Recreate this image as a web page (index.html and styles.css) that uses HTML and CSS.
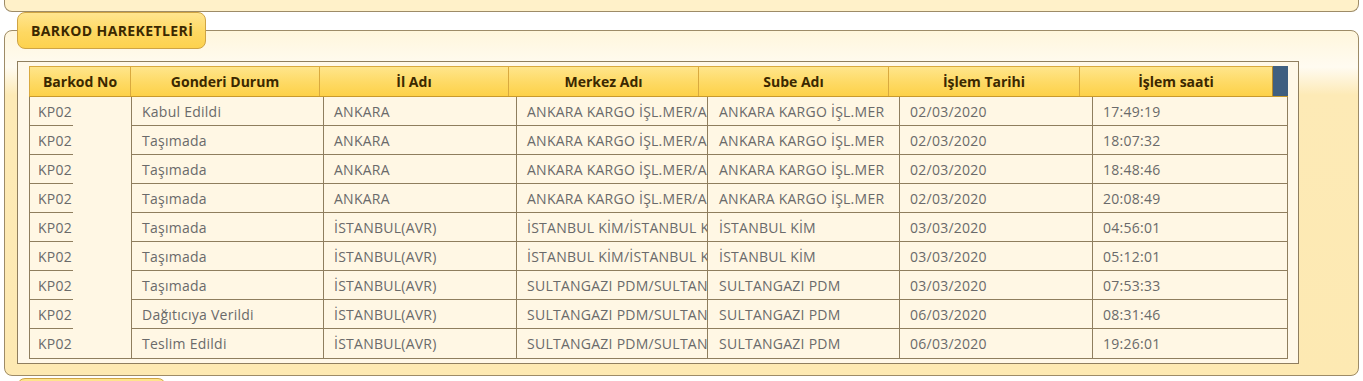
FILE: index.html
```html
<!DOCTYPE html>
<html lang="tr">
<head>
<meta charset="utf-8">
<title>Barkod Hareketleri</title>
<link rel="stylesheet" href="styles.css">
</head>
<body>
<div class="top-panel"></div>
<fieldset class="panel">
  <legend class="legend">BARKOD HAREKETLERİ</legend>
  <div class="grid-box">
    <div class="grid-head">
      <div class="hcell w1">Barkod No</div>
      <div class="hcell w2">Gonderi Durum</div>
      <div class="hcell w3">İl Adı</div>
      <div class="hcell w4">Merkez Adı</div>
      <div class="hcell w5">Sube Adı</div>
      <div class="hcell w6">İşlem Tarihi</div>
      <div class="hcell w7">İşlem saati</div>
      <div class="scroll"></div>
    </div>
    <div class="grid-body">
      <div class="row"><div class="cell c1"><span>KP02</span></div><div class="cell c2">Kabul Edildi</div><div class="cell c3">ANKARA</div><div class="cell c4">ANKARA KARGO İŞL.MER/ANKARA KARGO İŞL.MER</div><div class="cell c5">ANKARA KARGO İŞL.MER</div><div class="cell c6">02/03/2020</div><div class="cell c7">17:49:19</div></div>
      <div class="row"><div class="cell c1"><span>KP02</span></div><div class="cell c2">Taşımada</div><div class="cell c3">ANKARA</div><div class="cell c4">ANKARA KARGO İŞL.MER/ANKARA KARGO İŞL.MER</div><div class="cell c5">ANKARA KARGO İŞL.MER</div><div class="cell c6">02/03/2020</div><div class="cell c7">18:07:32</div></div>
      <div class="row"><div class="cell c1"><span>KP02</span></div><div class="cell c2">Taşımada</div><div class="cell c3">ANKARA</div><div class="cell c4">ANKARA KARGO İŞL.MER/ANKARA KARGO İŞL.MER</div><div class="cell c5">ANKARA KARGO İŞL.MER</div><div class="cell c6">02/03/2020</div><div class="cell c7">18:48:46</div></div>
      <div class="row"><div class="cell c1"><span>KP02</span></div><div class="cell c2">Taşımada</div><div class="cell c3">ANKARA</div><div class="cell c4">ANKARA KARGO İŞL.MER/ANKARA KARGO İŞL.MER</div><div class="cell c5">ANKARA KARGO İŞL.MER</div><div class="cell c6">02/03/2020</div><div class="cell c7">20:08:49</div></div>
      <div class="row"><div class="cell c1"><span>KP02</span></div><div class="cell c2">Taşımada</div><div class="cell c3">İSTANBUL(AVR)</div><div class="cell c4">İSTANBUL KİM/İSTANBUL KİM</div><div class="cell c5">İSTANBUL KİM</div><div class="cell c6">03/03/2020</div><div class="cell c7">04:56:01</div></div>
      <div class="row"><div class="cell c1"><span>KP02</span></div><div class="cell c2">Taşımada</div><div class="cell c3">İSTANBUL(AVR)</div><div class="cell c4">İSTANBUL KİM/İSTANBUL KİM</div><div class="cell c5">İSTANBUL KİM</div><div class="cell c6">03/03/2020</div><div class="cell c7">05:12:01</div></div>
      <div class="row"><div class="cell c1"><span>KP02</span></div><div class="cell c2">Taşımada</div><div class="cell c3">İSTANBUL(AVR)</div><div class="cell c4">SULTANGAZI PDM/SULTANGAZI PDM</div><div class="cell c5">SULTANGAZI PDM</div><div class="cell c6">03/03/2020</div><div class="cell c7">07:53:33</div></div>
      <div class="row"><div class="cell c1"><span>KP02</span></div><div class="cell c2">Dağıtıcıya Verildi</div><div class="cell c3">İSTANBUL(AVR)</div><div class="cell c4">SULTANGAZI PDM/SULTANGAZI PDM</div><div class="cell c5">SULTANGAZI PDM</div><div class="cell c6">06/03/2020</div><div class="cell c7">08:31:46</div></div>
      <div class="row"><div class="cell c1"><span>KP02</span></div><div class="cell c2">Teslim Edildi</div><div class="cell c3">İSTANBUL(AVR)</div><div class="cell c4">SULTANGAZI PDM/SULTANGAZI PDM</div><div class="cell c5">SULTANGAZI PDM</div><div class="cell c6">06/03/2020</div><div class="cell c7">19:26:01</div></div>
    </div>
  </div>
</fieldset>
<fieldset class="panel panel-next">
  <legend class="legend legend-next">&nbsp;</legend>
</fieldset>
</body>
</html>
```
FILE: styles.css
```css
html, body {
  margin: 0;
  padding: 0;
  background: #ffffff;
}
body {
  padding: 0 4px;
  font-family: "Open Sans", "Noto Sans", sans-serif;
  overflow: hidden;
}
.top-panel {
  height: 11px;
  border: 1px solid #9d8b67;
  border-top: none;
  border-radius: 0 0 8px 8px;
  background: #fff1c9;
}
.panel {
  margin: 0;
  padding: 12px 12px 11px 12px;
  border: 1px solid #9d8b67;
  border-radius: 8px;
  background: linear-gradient(to bottom, #fff6dc 0px, #fffbf1 36px, #fdeab6 64px, #fde9b2 100%);
  min-width: 0;
}
.legend {
  box-sizing: border-box;
  width: 189px;
  height: 37px;
  margin: 0;
  padding: 0 0 0 13px;
  border: 1px solid #cfa444;
  border-radius: 8px;
  background: linear-gradient(to bottom, #ffe58f 0%, #fed862 55%, #fdd24e 100%);
  color: #3b2800;
  font-weight: 700;
  font-size: 14px;
  letter-spacing: 0.4px;
  line-height: 35px;
  white-space: nowrap;
}
.grid-box {
  box-sizing: border-box;
  width: 1282px;
  padding: 4px 10px 4px 11px;
  border: 1px solid #8f7e5e;
  background: #fff8e8;
}
.grid-head {
  display: flex;
  height: 30px;
  border-bottom: 1px solid #c99a2c;
  background: linear-gradient(to bottom, #ffe68e 0%, #fedb68 50%, #fdd148 100%);
}
.hcell {
  box-sizing: border-box;
  height: 30px;
  border-left: 1px solid #d9a93e;
  border-top: 1px solid #d9a93e;
  color: #3b2800;
  font-weight: 700;
  font-size: 14px;
  line-height: 29px;
  text-align: center;
  white-space: nowrap;
}
.w1 { width: 101px; }
.w2 { width: 189px; }
.w3 { width: 189px; }
.w4 { width: 190px; }
.w5 { width: 190px; }
.w6 { width: 191px; }
.w7 { width: 194px; border-right: 1px solid #b3892e; }
.scroll {
  width: 15px;
  height: 30px;
  background: #3f5f80;
}
.grid-body {
  border-bottom: 1px solid #8f7e5e;
  background: #fff7e4;
}
.row {
  display: flex;
  height: 29px;
}
.cell {
  box-sizing: border-box;
  height: 29px;
  padding-top: 2px;
  padding-left: 10px;
  border-left: 1px solid #8f7e5e;
  border-bottom: 1px solid #8f7e5e;
  color: #6a6a6a;
  font-size: 14px;
  letter-spacing: 0.25px;
  line-height: 26px;
  white-space: nowrap;
  overflow: hidden;
  text-overflow: clip;
}
.row:last-child .cell { border-bottom: none; }
.c1 { width: 102px; padding: 0; border-bottom: none; }
.c1 span {
  display: block;
  box-sizing: border-box;
  width: 43px;
  height: 29px;
  padding-top: 2px;
  padding-left: 8px;
  border-bottom: 1px solid #8f7e5e;
  overflow: hidden;
}
.row:last-child .c1 span { border-bottom: none; }
.c2 { width: 192px; }
.c3 { width: 193px; }
.c4 { width: 191px; padding-right: 0; }
.c5 { width: 192px; padding-left: 11px; }
.c6 { width: 193px; }
.c7 { width: 196px; border-right: 1px solid #8f7e5e; }
.panel-next {
  margin-top: 2px;
  padding: 0 12px;
  height: 40px;
}
.legend-next {
  width: 149px;
}
```
